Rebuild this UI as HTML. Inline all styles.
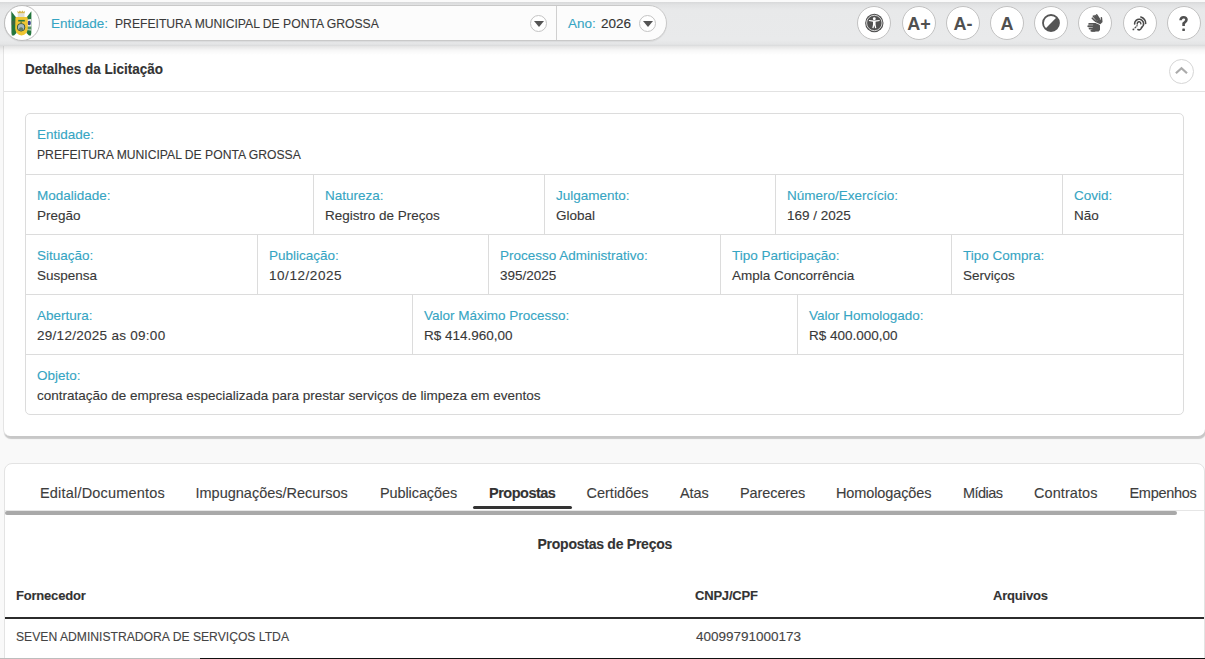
<!DOCTYPE html>
<html lang="pt-BR"><head><meta charset="utf-8">
<title>Detalhes da Licitação</title>
<style>
*{box-sizing:border-box;margin:0;padding:0}
body{-webkit-text-stroke:0.12px}
html,body{width:1205px;height:659px;overflow:hidden;background:#f9f9f9;font-family:"Liberation Sans",sans-serif;color:#333;position:relative}
.abs{position:absolute;z-index:4}
.topbar{position:absolute;left:0;top:0;width:1205px;height:46px;background:linear-gradient(#d8d9da 0,#e2e3e4 3px,#e8e9ea 8px,#e9eaeb 38px,#e4e5e6 42px,#d9dadb 44px);border-top:2px solid #fafafa;z-index:2}
.tshadow{position:absolute;left:0;top:46px;width:1205px;height:9px;background:linear-gradient(rgba(0,0,0,.11),rgba(0,0,0,.03) 50%,rgba(0,0,0,0));z-index:2}
.pill{z-index:3;position:absolute;left:4px;top:5px;width:663px;height:36px;box-shadow:0 1px 1px rgba(0,0,0,.06);border:1px solid #c9c9c9;border-radius:18px;background:#fcfcfc}
.logo{z-index:4;position:absolute;left:4px;top:5px;width:36px;height:36px;border-radius:50%;border:1px solid #bdbdbd;background:#fff}
.lbl{color:#36a5c3}
.up{transform:scaleX(.9);transform-origin:0 0}
.dg{letter-spacing:.55px}
.t13{font-size:13.5px;white-space:nowrap}
.dd{z-index:4;position:absolute;width:17px;height:17px;border-radius:50%;border:1px solid #c4c4c4;background:#fff}
.dd:after{content:"";position:absolute;left:2.5px;top:5.6px;border-left:5px solid transparent;border-right:5px solid transparent;border-top:6px solid #555}
.acc{z-index:4;position:absolute;top:6px;width:34px;height:34px;border-radius:50%;border:1px solid #c2c2c2;background:#fff;display:flex;align-items:center;justify-content:center;color:#505050;font-weight:bold;-webkit-text-stroke:0}
.acct{padding-top:3px}
.panel1{position:absolute;left:3px;top:45px;width:1202px;height:391px;background:#fff;border-left:1px solid #e4e4e4;border-radius:0 0 7px 7px;box-shadow:1px 3px 1px rgba(0,0,0,.2)}
.hdr{position:absolute;left:0;top:0;width:100%;height:47px;border-bottom:1px solid #e2e2e2}
.grid{position:absolute;left:25px;top:113px;width:1159px;height:302px;border:1px solid #dcdcdc;border-radius:5px;background:#fff}
.r1 .l{top:13px!important}.r1 .v{top:33px!important}
.row{position:absolute;left:0;width:100%;height:60px;border-top:1px solid #dcdcdc}
.cell{position:absolute;top:0;height:100%;border-left:1px solid #dcdcdc}
.cell .l{position:absolute;left:11px;top:12.5px;font-size:13.5px;color:#36a5c3;white-space:nowrap}
.cell .v{position:absolute;left:11px;top:32.5px;font-size:13.5px;color:#383838;white-space:nowrap}
.panel2{position:absolute;left:4px;top:463px;width:1201px;height:220px;background:#fff;border:1px solid #e3e3e3;border-radius:8px 8px 0 0}
.tab{position:absolute;top:23px;font-size:14.5px;color:#3d3d3d;white-space:nowrap}
</style></head>
<body>
<div class="topbar"></div><div class="tshadow"></div>
<div class="pill"></div>
<div class="logo"><svg style="position:absolute;left:1px;top:1px" width="32" height="32" viewBox="0 0 32 32"><path d="M5.3 4.3 L10.5 11 L10.5 26 L8 28.6 L6.2 28.6 L5.6 26 Z" fill="#23763c"/><path d="M5.3 4.3 L5.7 27 L6.2 28.6" fill="none" stroke="#6f8a6f" stroke-width="0.5"/><path d="M25.4 4.3 L20.5 10.6 L20.5 26 L23 28.6 L24.8 28.6 L25.3 26 Z" fill="#23763c"/><path d="M21 12.5 L25.2 12 L25.2 23.5 L21 23 Z" fill="#eef0ea"/><ellipse cx="23.2" cy="16" rx="1.7" ry="2.2" fill="#37428a"/><path d="M21 19.5 L25.2 19.5 L25.2 22.5 L21 22.5 Z" fill="#2f7a45" opacity="0.8"/><path d="M5.8 13.8 L9.6 13.4 L9.6 17.6 L5.8 18 Z" fill="#4c5a4a" opacity="0.6"/><path d="M11.4 3.7 L12.7 5.1 L13.9 3.4 L15.2 5 L16.5 3.4 L17.7 5.1 L19 3.7 L18.6 6.6 L11.8 6.6 Z" fill="#d4b550"/><path d="M11.8 6.8 L18.4 6.8 L18.6 9.9 L11.6 9.9 Z" fill="#deded6"/><path d="M9.4 11.2 Q9.4 9.9 10.8 9.9 L20.3 9.9 Q21.7 9.9 21.7 11.2 L21.8 21.5 Q21.6 27.4 15.5 28.6 Q9.4 27.4 9.2 21.5 Z" fill="#efc532"/><path d="M12.2 12.9 L18.8 12.9 L18.8 14.5 L12.2 14.5 Z" fill="#2b7a3c"/><path d="M15.1 14.5 L15.1 16.4" stroke="#2b5a3a" stroke-width="1"/><circle cx="15.1" cy="20.3" r="4.1" fill="#36553f"/><circle cx="15.1" cy="20.3" r="3.2" fill="#a7b8bd"/><path d="M13 21.5 Q15 19 17.2 21.5 L17 23 L13.2 23 Z" fill="#5f7f6a"/></svg></div>
<div class="abs t13 lbl" style="left:51px;top:16px">Entidade:</div>
<div class="abs t13 up" style="left:115px;top:16px;color:#3a3a3a">PREFEITURA MUNICIPAL DE PONTA GROSSA</div>
<div class="dd" style="left:530px;top:14.6px"></div>
<div class="abs" style="left:556px;top:6px;width:1px;height:34px;background:#d0d0d0"></div>
<div class="abs t13 lbl" style="left:568px;top:16px">Ano:</div>
<div class="abs t13" style="left:601px;top:16px">2026</div>
<div class="dd" style="left:639px;top:14.6px"></div>

<div class="acc" style="left:857px"><svg width="20" height="20" viewBox="0 0 20 20"><circle cx="10.3" cy="10" r="9.2" fill="#505050"/><circle cx="10.3" cy="10" r="7.7" fill="none" stroke="#fff" stroke-width="0.75"/><circle cx="10.3" cy="5.8" r="1.45" fill="#fff"/><path d="M5 6.9 L10.3 7.4 L15.6 6.9 L15.7 8.1 L11.6 8.8 L11.6 11.4 L12.3 15.1 L11.1 15.3 L10.3 12.2 L9.5 15.3 L8.3 15.1 L9 11.4 L9 8.8 L4.9 8.1 Z" fill="#fff"/></svg></div>
<div class="acc acct" style="left:902px;font-size:18px">A+</div>
<div class="acc acct" style="left:946px;font-size:18px">A-</div>
<div class="acc acct" style="left:990px;font-size:18px">A</div>
<div class="acc" style="left:1034px"><svg width="20" height="20" viewBox="0 0 20 20"><circle cx="10" cy="10" r="8" fill="#fff" stroke="#555" stroke-width="1.8"/><path d="M15.66 4.34 A8 8 0 0 1 4.34 15.66 Z" fill="#555"/></svg></div>
<div class="acc" style="left:1078px"><svg style="position:absolute;left:5px;top:4px" width="22" height="24" viewBox="0 0 22 24"><g stroke="#555" stroke-linecap="round" fill="none"><path d="M8.3 7.2 L11.8 10.6 M9.4 5.2 L12.9 9.1 M11 4.6 L14.2 8.5 M12.7 3.9 L15.3 7.9" stroke-width="1.6"/><path d="M17.4 6.8 L17.8 10.9" stroke-width="1.5"/><path d="M5.2 12.9 L10.9 12.9 M4.3 15.3 L10.6 15.3 M5.6 17.6 L10.6 17.6 M7.4 19.7 L10.6 19.7" stroke-width="1.9"/></g><path d="M11.3 10.9 L15.3 8 L17.5 9.1 L17.9 11.7 L16 13.5 L12.4 12 Z" fill="#555"/><path d="M10.2 12 L14.6 12.4 L16 14.2 L16 18.9 L14.6 20.5 L8 20.5 L9.5 12 Z" fill="#555"/><path d="M10 10.8 L16.4 13.8" stroke="#fff" stroke-width="0.8"/></svg></div>
<div class="acc" style="left:1123px"><svg width="18" height="18" viewBox="0 0 18 18"><path d="M3.6 10 A4.5 4.5 0 1 1 12.2 11.6 C11.2 13 10.5 13.3 10.1 14.5 A2.2 2.2 0 0 1 6.9 15.5" fill="none" stroke="#4a4a4a" stroke-width="1.6" stroke-linecap="round"/><path d="M6.3 10 A1.8 1.8 0 1 1 9.8 9.9" fill="none" stroke="#4a4a4a" stroke-width="1.4" stroke-linecap="round"/><path d="M9.8 3 A7 7 0 0 1 14.7 9.6" fill="none" stroke="#4a4a4a" stroke-width="1.5" stroke-linecap="round"/><circle cx="2.4" cy="15.4" r="0.95" fill="#4a4a4a"/><path d="M4 13.9 L5 12.9" stroke="#4a4a4a" stroke-width="1.3" stroke-linecap="round"/><circle cx="6" cy="11.8" r="0.75" fill="#4a4a4a"/></svg></div>
<div class="acc" style="left:1167px"><svg width="20" height="20" viewBox="0 0 20 20"><path d="M6.6 7.3 C6.6 4.9 7.9 4.2 9.6 4.2 C11.4 4.2 12.5 5.3 12.5 6.8 C12.5 8.6 10.7 9 9.6 10.4 L9.6 13" fill="none" stroke="#505050" stroke-width="2.6"/><rect x="8.3" y="15.4" width="2.6" height="2.5" rx="0.5" fill="#505050"/></svg></div>

<div class="panel1">
  <div class="hdr"></div>
</div>
<div class="abs" style="left:24.5px;top:60px;font-size:15px;font-weight:bold;color:#333;transform:scaleX(.9);transform-origin:0 0">Detalhes da Licitação</div>
<div class="abs" style="left:1168.5px;top:58.5px;width:25.5px;height:25.5px;border-radius:50%;border:1.4px solid #d6d6d6"><svg style="position:absolute;left:0;top:0" width="23" height="23" viewBox="0 0 23 23"><path d="M5.9 13.3 L11.5 8.2 L17 13.3" fill="none" stroke="#ababab" stroke-width="2.2"/></svg></div>

<div class="grid">
  <div class="row r1" style="top:0;border-top:0">
    <div class="cell" style="left:0;border-left:0"><span class="l">Entidade:</span><span class="v up">PREFEITURA MUNICIPAL DE PONTA GROSSA</span></div>
  </div>
  <div class="row" style="top:60px">
    <div class="cell" style="left:0;border-left:0"><span class="l">Modalidade:</span><span class="v">Pregão</span></div>
    <div class="cell" style="left:287px"><span class="l">Natureza:</span><span class="v">Registro de Preços</span></div>
    <div class="cell" style="left:518px"><span class="l">Julgamento:</span><span class="v">Global</span></div>
    <div class="cell" style="left:749px"><span class="l">Número/Exercício:</span><span class="v">169 / 2025</span></div>
    <div class="cell" style="left:1036px"><span class="l">Covid:</span><span class="v">Não</span></div>
  </div>
  <div class="row" style="top:120px">
    <div class="cell" style="left:0;border-left:0"><span class="l">Situação:</span><span class="v">Suspensa</span></div>
    <div class="cell" style="left:231px"><span class="l">Publicação:</span><span class="v dg">10/12/2025</span></div>
    <div class="cell" style="left:462px"><span class="l">Processo Administrativo:</span><span class="v">395/2025</span></div>
    <div class="cell" style="left:694px"><span class="l">Tipo Participação:</span><span class="v">Ampla Concorrência</span></div>
    <div class="cell" style="left:925px"><span class="l">Tipo Compra:</span><span class="v">Serviços</span></div>
  </div>
  <div class="row" style="top:180px">
    <div class="cell" style="left:0;border-left:0"><span class="l">Abertura:</span><span class="v" style="letter-spacing:.28px">29/12/2025 as 09:00</span></div>
    <div class="cell" style="left:386px"><span class="l">Valor Máximo Processo:</span><span class="v">R$ 414.960,00</span></div>
    <div class="cell" style="left:771px"><span class="l">Valor Homologado:</span><span class="v">R$ 400.000,00</span></div>
  </div>
  <div class="row" style="top:240px">
    <div class="cell" style="left:0;border-left:0"><span class="l">Objeto:</span><span class="v">contratação de empresa especializada para prestar serviços de limpeza em eventos</span></div>
  </div>
</div>

<div class="panel2"></div>
<div class="tab" style="left:40px;top:484.5px;letter-spacing:.19px">Edital/Documentos</div>
<div class="tab" style="left:195.5px;top:484.5px">Impugnações/Recursos</div>
<div class="tab" style="left:380px;top:484.5px;letter-spacing:-.1px">Publicações</div>
<div class="tab" style="left:489px;top:484.5px;font-weight:bold;color:#333;letter-spacing:-.5px">Propostas</div>
<div class="tab" style="left:586.5px;top:484.5px">Certidões</div>
<div class="tab" style="left:680px;top:484.5px;letter-spacing:-.1px">Atas</div>
<div class="tab" style="left:740px;top:484.5px;letter-spacing:-.1px">Pareceres</div>
<div class="tab" style="left:836px;top:484.5px;letter-spacing:-.12px">Homologações</div>
<div class="tab" style="left:963px;top:484.5px;letter-spacing:-.55px">Mídias</div>
<div class="tab" style="left:1034px;top:484.5px;letter-spacing:.08px">Contratos</div>
<div class="tab" style="left:1129.5px;top:484.5px;letter-spacing:-.3px">Empenhos</div>
<div class="abs" style="left:473px;top:506px;width:99px;height:3px;background:#333;border-radius:2px"></div>
<div class="abs" style="left:5px;top:510px;width:1199px;height:1px;background:#e6e6e6"></div>
<div class="abs" style="left:5px;top:511px;width:1172px;height:4px;background:#a9a9a9;border-radius:2px"></div>

<div class="abs" style="left:537.5px;top:536px;font-size:14px;font-weight:bold;color:#333;letter-spacing:-.25px">Propostas de Preços</div>
<div class="abs" style="left:16px;top:588px;font-size:13px;font-weight:bold;color:#333;letter-spacing:-.2px">Fornecedor</div>
<div class="abs" style="left:695px;top:588px;font-size:13px;font-weight:bold;color:#333;letter-spacing:-.2px">CNPJ/CPF</div>
<div class="abs" style="left:993px;top:588px;font-size:13px;font-weight:bold;color:#333;letter-spacing:-.2px">Arquivos</div>
<div class="abs" style="left:5px;top:617px;width:1199px;height:2px;background:#2b2b2b"></div>
<div class="abs" style="left:0;top:658px;width:200px;height:1px;background:#bdbdbd"></div>
<div class="abs" style="left:200px;top:658px;width:1005px;height:1px;background:#111"></div>
<div class="abs t13 up" style="left:16px;top:629px;color:#444">SEVEN ADMINISTRADORA DE SERVIÇOS LTDA</div>
<div class="abs t13" style="left:696px;top:629px;color:#444">40099791000173</div>
</body></html>
